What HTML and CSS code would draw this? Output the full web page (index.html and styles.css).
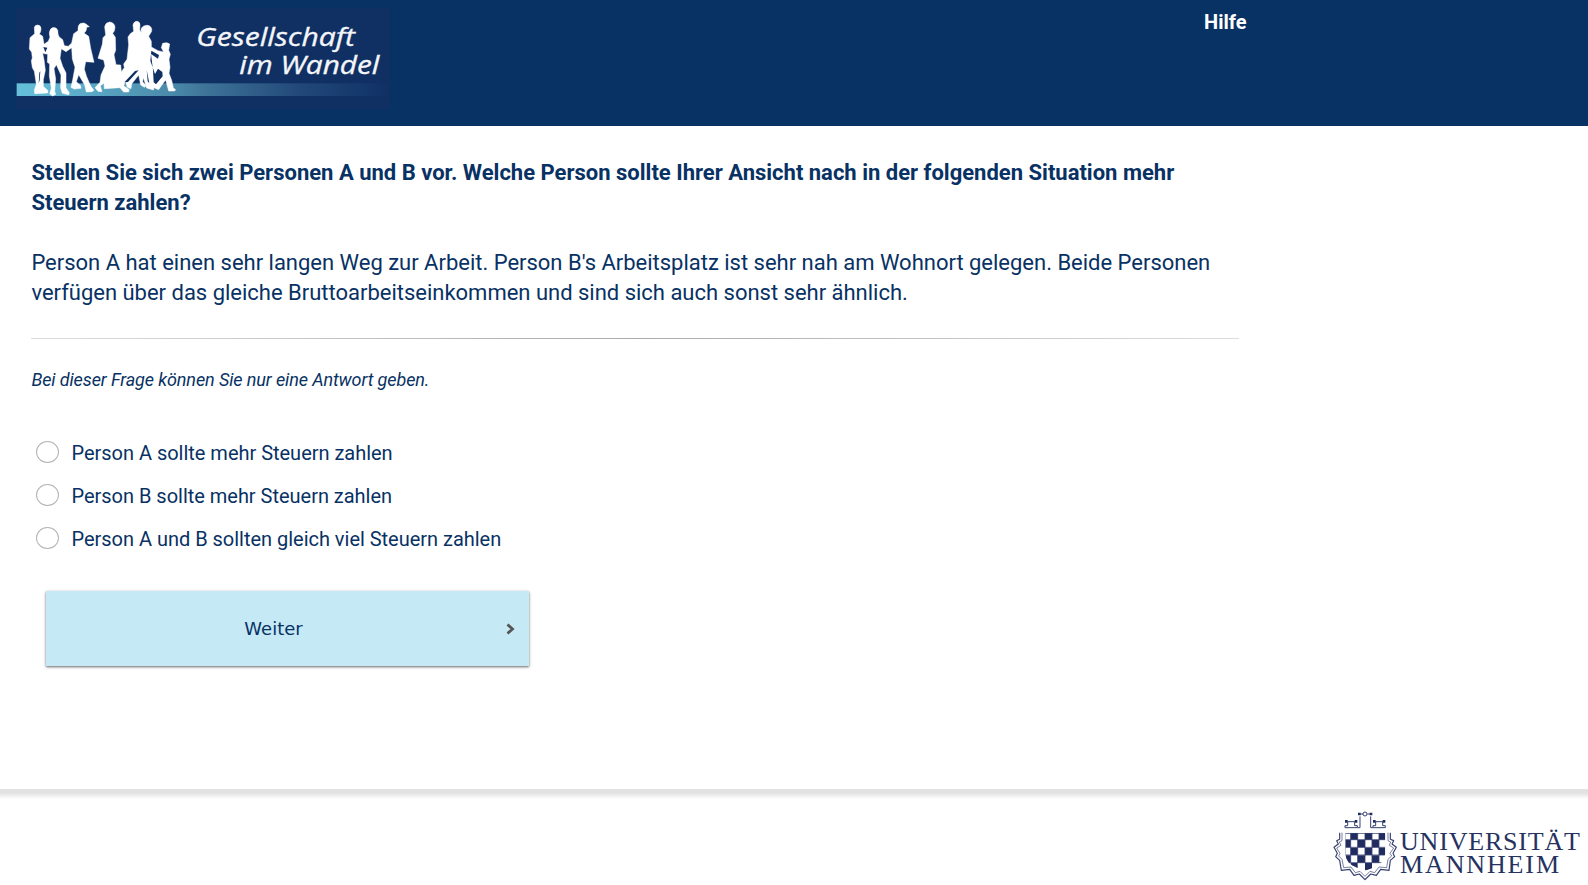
FILE: index.html
```html
<!DOCTYPE html>
<html lang="de">
<head>
<meta charset="utf-8">
<title>Gesellschaft im Wandel</title>
<link rel="stylesheet" href="styles.css">
</head>
<body>
<header class="header">
  <div class="header-inner">
    <svg class="logo" viewBox="48 24 1122 303" role="img" aria-label="Gesellschaft im Wandel">
      <defs>
        <linearGradient id="band" x1="0" x2="1" y1="0" y2="0">
          <stop offset="0" stop-color="#66c0da"/>
          <stop offset=".14" stop-color="#5fb0cd"/>
          <stop offset=".42" stop-color="#4a89a9"/>
          <stop offset=".5" stop-color="#3f7599"/>
          <stop offset=".75" stop-color="#22497a"/>
          <stop offset="1" stop-color="#103064"/>
        </linearGradient>
      </defs>
      <rect x="48" y="24" width="1122" height="303" fill="#103064"/>
      <rect x="50" y="250" width="1120" height="38" fill="url(#band)"/>
      <g fill="#fff" stroke="#fff" stroke-width="1.5" stroke-linejoin="round">
        <path d="M103 82Q105 75 113 75Q123 76 123 86Q123 96 118 102L128 109L132 133L145 124L150 111Q145 98 152 87Q158 80 168 84Q175 89 174 102L177 110L188 119L193 137L205 139L215 129L221 101L234 92Q233 76 240 71Q252 66 259 73L268 80L260 82Q260 94 252 99L266 109L272 145L282 187L257 185L253 208L260 230L272 258L282 271L276 275L259 276L254 255L236 224L229 245L242 257L243 265L222 267L213 262L218 240L225 202L217 177L215 143L198 155L184 146L180 175L188 199L198 219L198 263L208 279L206 284L187 280L182 264L183 225L169 194L162 206L167 237L164 274L167 283L158 288L149 281L154 264L148 228L149 192L142 187L143 163L128 160L132 179L136 211L130 239L130 259L144 272L143 279L104 281L103 270L109 253L103 214L97 203L94 182L97 174L95 157L88 147L90 113L104 101Z"/>
        <path d="M317 105L314 80Q317 67 329 66Q344 68 345 82Q345 93 338 100L346 112L347 151L342 164L348 194L362 195L364 215L373 203L371 192L381 178L386 134L384 111L391 101L401 94L399 75Q402 63 412 64Q420 66 420 75L419 89L424 98L423 87Q429 75 444 76Q457 80 455 94L446 109L454 124L454 141L474 152L491 156L484 143L488 130Q501 125 509 132L506 151L511 163L507 178L510 202L507 220L515 241L520 263L527 270L523 273L506 273L497 240L482 260L476 269L462 263L460 270L440 264L430 233L428 245L438 258L433 262L422 255L416 225L395 252L393 266L382 262L376 245L371 257L388 269L386 276L371 276L360 263L313 266L312 250L301 257L306 275L294 274L285 263L300 247L303 225L315 198L311 180L294 175L307 133L309 113Z"/>
      </g>
      <g fill="#103064">
        <path d="M118 218L121 214L119 240L116 251ZM130 141L142 143L136 157ZM416 211L384 246L373 247L405 213ZM454 152L477 165L474 176L453 162L459 210L461 247L468 253L488 229L487 216L474 206L465 222L451 182ZM440 210L448 250L443 244Z"/>
      </g>
      <g class="logo-text">
        <text x="589" y="138" textLength="476" lengthAdjust="spacingAndGlyphs">Gesellschaft</text>
        <text x="718" y="223" textLength="420" lengthAdjust="spacingAndGlyphs">im Wandel</text>
      </g>
    </svg>
    <a class="help">Hilfe</a>
  </div>
</header>
<main class="content">
  <h1 class="question">Stellen Sie sich zwei Personen A und B vor. Welche Person sollte Ihrer Ansicht nach in der folgenden Situation mehr<br>Steuern zahlen?</h1>
  <p class="situation">Person A hat einen sehr langen Weg zur Arbeit. Person B's Arbeitsplatz ist sehr nah am Wohnort gelegen. Beide Personen<br>verfügen über das gleiche Bruttoarbeitseinkommen und sind sich auch sonst sehr ähnlich.</p>
  <div class="divider"></div>
  <p class="hint">Bei dieser Frage können Sie nur eine Antwort geben.</p>
  <div class="options">
    <label class="option"><input class="radio" type="radio" name="answer"><span>Person A sollte mehr Steuern zahlen</span></label>
    <label class="option"><input class="radio" type="radio" name="answer"><span>Person B sollte mehr Steuern zahlen</span></label>
    <label class="option"><input class="radio" type="radio" name="answer"><span>Person A und B sollten gleich viel Steuern zahlen</span></label>
  </div>
  <button class="next"><span class="next-label">Weiter</span>
    <svg class="chevron" viewBox="0 0 9 12"><path d="M1.5 1.5L6.5 6L1.5 10.5" fill="none" stroke="#555" stroke-width="2.8"/></svg>
  </button>
</main>
<footer class="footer">
  <svg class="uni" viewBox="0 0 263 80" role="img" aria-label="Universität Mannheim">
    <g transform="scale(.33333)" stroke-linejoin="round">
      <g fill="none" stroke="#35406f" stroke-width="3">
        <path d="M60 68H97V62H89V50H68V62H60ZM144 68H181V62H173V50H152V62H144Z"/>
        <path d="M97 68H105V34M144 68H137V34M101 27H114M127 27H140"/>
        <circle cx="120" cy="27" r="6"/>
        <path stroke-width="3.5" d="M44 83V103L35 107L40 117L27 127L37 145L32 155L44 166L49 196L74 193L87 211L103 207L120 224L137 207L154 211L167 193L192 196L196 166L209 155L204 145L214 127L201 117L206 107L196 103V83"/>
        <path d="M51 83V107L43 111L48 121L35 129L45 145L41 153L51 163L56 188L78 186L91 203L105 199L120 214L135 199L149 203L162 186L185 188L189 163L200 153L195 145L206 129L193 121L197 111L189 107V83" stroke-width="2"/>
      </g>
      <path fill="#202c60" d="M60 45h8v8h-8zM89 45h8v8h-8zM144 45h8v8h-8zM173 45h8v8h-8zM99 23h8v8h-8zM134 23h8v8h-8z"/>
      <clipPath id="shield"><path d="M61 83H181V145Q178 178 145 188L120 197L96 188Q62 177 61 145Z"/></clipPath>
      <g clip-path="url(#shield)">
        <rect x="60" y="82" width="122" height="116" fill="#fff"/>
        <path fill="#202c60" d="M77 83h21v21h-21zM120 83h21v21h-21zM162 83h20v21h-20zM57 105h20v22h-20zM98 105h22v22h-22zM141 105h21v22h-21zM77 128h21v22h-21zM120 128h21v22h-21zM162 128h20v22h-20zM57 151h20v22h-20zM98 151h22v22h-22zM141 151h21v22h-21zM77 174h21v22h-21zM120 174h21v22h-21z"/>
        <path fill="none" stroke="#35406f" stroke-width="2.5" d="M61 85h120M61 83v64q3 28 24 36M77 83v90M98 83v90M120 83v90M141 83v90M162 83v90M60 104h122M60 127h122M60 150h122M68 173h108"/>
      </g>
    </g>
    <g class="uni-text">
      <text x="75" y="44.6" textLength="180">UNIVERSITÄT</text>
      <text x="75" y="67.6" textLength="159">MANNHEIM</text>
    </g>
  </svg>
</footer>
</body>
</html>
```
FILE: styles.css
```css
* { box-sizing: border-box; }
body {
  margin: 0;
  height: 885px;
  display: flex;
  flex-direction: column;
  overflow: hidden;
  background: #fff;
  color: #083164;
  font-family: Roboto, sans-serif;
}
.header { height: 126px; background: #083164; }
.header-inner {
  display: flex;
  justify-content: space-between;
  width: 1246.5px;
  padding: 8px 0 0 16px;
}
.logo { width: 374px; height: 101px; }
.logo-text {
  fill: #f4f6f9;
  stroke: #f4f6f9;
  stroke-width: 1;
  font: italic 79px "Open Sans", "Noto Sans", sans-serif;
}
.help { color: #fff; font-size: 20px; line-height: 28px; font-weight: 700; }
.content {
  height: 663px;
  padding: 32px 0 0 31px;
}
.question, .situation {
  margin: 0 0 30px;
  padding-left: .4px;
  font-size: 22px;
  line-height: 30px;
  white-space: nowrap;
}
.question { font-weight: 700; }
.situation { font-weight: 400; letter-spacing: -.01px; }
.divider {
  width: 1208px;
  height: 1px;
  background: linear-gradient(90deg, #ddd, #aaa 50%, #ddd);
}
.hint {
  margin: 29px 0 0;
  padding-left: .4px;
  font-size: 18px;
  line-height: 24px;
  font-style: italic;
  letter-spacing: -.11px;
}
.options { margin-top: 39px; }
.option {
  display: flex;
  align-items: center;
  gap: 12.5px;
  height: 43px;
  padding-left: 5px;
  font-size: 20px;
  letter-spacing: -.02px;
}
.radio {
  appearance: none;
  width: 23px;
  height: 22px;
  margin: 0 0 2px;
  border: 1px solid #b4b4b4;
  border-radius: 50%;
}
.next {
  display: flex;
  align-items: center;
  width: 483px;
  height: 75px;
  margin: 31px 0 0 15px;
  padding: 0 14px;
  border: 0;
  background: #c5e9f5;
  color: #083164;
  font: 18px "DejaVu Sans", sans-serif;
  box-shadow: 0 1px 2px rgba(0, 0, 0, .5), 0 1px 4px rgba(0, 0, 0, .15);
}
.next-label { flex: 1; padding-right: 19px; }
.chevron { width: 9px; height: 12px; margin-top: 1px; }
.footer {
  display: flex;
  justify-content: flex-end;
  height: 96px;
  padding-top: 16px;
  background: linear-gradient(#e2e2e2 0, #e2e2e2 4px, #fff 10px);
}
.uni { width: 263px; height: 80px; }
.uni-text {
  fill: #26325f;
  font: 26px "Liberation Serif", serif;
}
```
